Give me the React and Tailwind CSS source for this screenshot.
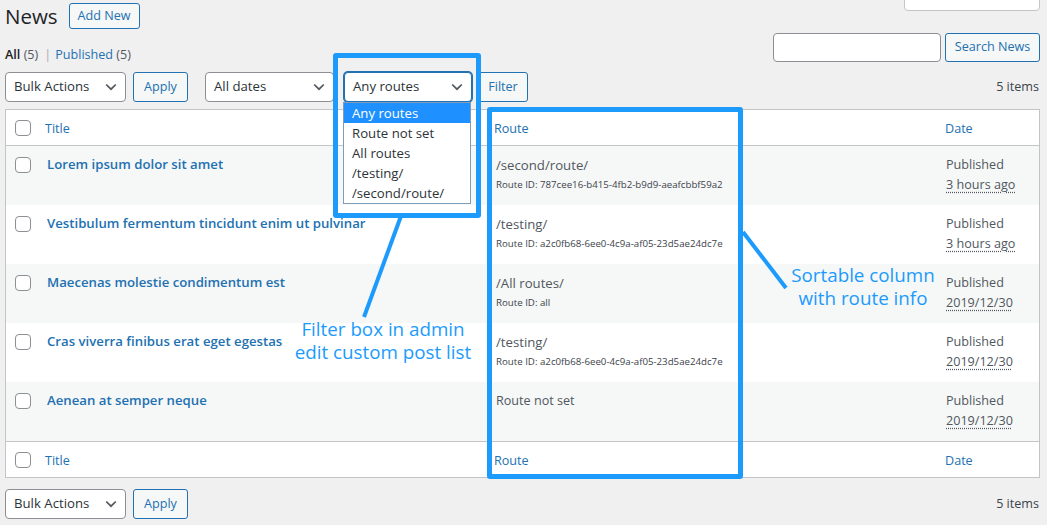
import React from 'react';

// Posts shown in the list table
const rows = [
  {
    title: 'Lorem ipsum dolor sit amet',
    route: '/second/route/',
    routeId: '787cee16-b415-4fb2-b9d9-aeafcbbf59a2',
    date: '3 hours ago',
  },
  {
    title: 'Vestibulum fermentum tincidunt enim ut pulvinar',
    route: '/testing/',
    routeId: 'a2c0fb68-6ee0-4c9a-af05-23d5ae24dc7e',
    date: '3 hours ago',
  },
  {
    title: 'Maecenas molestie condimentum est',
    route: '/All routes/',
    routeId: 'all',
    date: '2019/12/30',
  },
  {
    title: 'Cras viverra finibus erat eget egestas',
    route: '/testing/',
    routeId: 'a2c0fb68-6ee0-4c9a-af05-23d5ae24dc7e',
    date: '2019/12/30',
  },
  {
    title: 'Aenean at semper neque',
    route: null,
    routeId: null,
    date: '2019/12/30',
  },
];

const routeOptions = ['Any routes', 'Route not set', 'All routes', '/testing/', '/second/route/'];

const Chevron = () => (
  <svg width="12" height="8" viewBox="0 0 12 8" className="shrink-0">
    <path d="M1.2 1.5 6 6.2l4.8-4.7" fill="none" stroke="#50575e" strokeWidth="1.7" />
  </svg>
);

const Select = ({ label, className }) => (
  <div
    className={
      'h-[30px] flex items-center justify-between pl-[8px] pr-[8px] bg-white rounded-[4px] text-[13.2px] text-[#2c3338] ' +
      className
    }
  >
    <span>{label}</span>
    <Chevron />
  </div>
);

const Button = ({ children, className = '' }) => (
  <div
    className={
      'h-[30px] flex items-center justify-center border border-[#2271b1] rounded-[3px] bg-[#f6f7f7] text-[12.6px] text-[#2271b1] ' +
      className
    }
  >
    {children}
  </div>
);

const Checkbox = () => (
  <div className="w-[16px] h-[16px] bg-white border border-[#8c8f94] rounded-[4px]" />
);

const HeadRow = () => (
  <div className="grid grid-cols-[31px_449px_451px_1fr] h-[35px] items-center bg-white text-[12.6px] text-[#2271b1]">
    <div className="pl-[9px]">
      <Checkbox />
    </div>
    <div className="pl-[8px] pt-[3px]">Title</div>
    <div className="pl-[8px] pt-[3px]">Route</div>
    <div className="pl-[8px] pt-[3px]">Date</div>
  </div>
);

const Tablenav = ({ children }) => (
  <div className="flex items-center h-[30px]">
    <Select label="Bulk Actions" className="w-[121px] border border-[#8c8f94]" />
    <Button className="ml-[7px] w-[55px]">Apply</Button>
    {children}
    <div className="ml-auto pr-[1px] text-[12.6px] text-[#3c434a]">5 items</div>
  </div>
);

export default function App() {
  return (
    <div className="relative w-[1047px] h-[525px] overflow-hidden bg-[#f0f0f1] font-['Open_Sans',sans-serif] text-[12.6px] text-[#3c434a]">
      {/* screen options tab, mostly scrolled off the top */}
      <div className="absolute left-[904px] top-[-20px] w-[136px] h-[31px] flex items-end justify-center pb-[1px] bg-white border border-[#c3c4c7] rounded-b-[4px] text-[12.6px] text-[#50575e] leading-[14px]">
        <span className="translate-y-[-10px]">Screen Options</span>
      </div>

      <div className="pl-[5px] pr-[7px]">
        <div className="flex items-start h-[33px]">
          <h1 className="mt-[1px] text-[20.5px] leading-[30px] font-normal text-[#1d2327]">News</h1>
          <Button className="ml-[11px] mt-[3px] px-[8px] !h-[26px]">Add New</Button>
        </div>

        <div className="flex justify-between h-[29px]">
          <div className="mt-[13px] leading-[18px]">
            <span className="font-semibold text-[#1d2327]">All</span>{' '}
            <span className="text-[#50575e]">(5)</span>
            <span className="text-[#a7aaad] ml-[6px] mr-[4px]">|</span>
            <span className="text-[#2271b1]">Published</span>{' '}
            <span className="text-[#50575e]">(5)</span>
          </div>
          <div className="flex gap-[4px]">
            <div className="w-[168px] h-[29px] bg-white border border-[#8c8f94] rounded-[4px]" />
            <Button className="w-[95px] !h-[29px]">Search News</Button>
          </div>
        </div>

        <div className="mt-[10px]">
          <Tablenav>
            <Select label="All dates" className="ml-[17px] w-[129px] border border-[#8c8f94]" />
            <Select
              label="Any routes"
              className="ml-[10px] w-[128px] border border-[#2271b1] shadow-[0_0_0_1px_#2271b1]"
            />
            <Button className="ml-[6px] w-[50px]">Filter</Button>
          </Tablenav>
        </div>

        {/* list table */}
        <div className="mt-[7px] border border-[#c3c4c7] bg-white">
          <div className="border-b border-[#c3c4c7]">
            <HeadRow />
          </div>
          {rows.map((r, i) => (
            <div
              key={i}
              className={
                'grid grid-cols-[31px_449px_451px_1fr] h-[59px] ' + (i % 2 === 0 ? 'bg-[#f6f7f7]' : 'bg-white')
              }
            >
              <div className="pl-[9px] pt-[11px]">
                <Checkbox />
              </div>
              <div className="pl-[10px] pt-[8px] text-[13.2px] leading-[20px] font-semibold text-[#2271b1]">
                {r.title}
              </div>
              <div className="pl-[10px] pt-[9px] leading-[20px] text-[#50575e]">
                {r.route ? (
                  <>
                    <div className="text-[13.2px]">{r.route}</div>
                    <div className="text-[9.7px] leading-[20px] text-[#3c434a]">Route ID: {r.routeId}</div>
                  </>
                ) : (
                  <div className="text-[12.6px]">Route not set</div>
                )}
              </div>
              <div className="pl-[9px] pt-[9px] leading-[20px] text-[#50575e]">
                <div>Published</div>
                <div className="underline decoration-dotted decoration-[#50575e] underline-offset-[3px]">{r.date}</div>
              </div>
            </div>
          ))}
          <div className="border-t border-[#c3c4c7]">
            <HeadRow />
          </div>
        </div>

        <div className="mt-[11px]">
          <Tablenav />
        </div>
      </div>

      {/* open route filter dropdown */}
      <div className="absolute left-[343px] top-[102px] w-[128px] border border-[#7f9db9] bg-white text-[13.2px] text-[#2c3338]">
        {routeOptions.map((o, i) => (
          <div
            key={o}
            className={'h-[20px] leading-[20px] pl-[8px] ' + (i === 0 ? 'bg-[#1e90ff] text-white' : '')}
          >
            {o}
          </div>
        ))}
      </div>

      {/* annotation frames */}
      <div className="absolute left-[333px] top-[53px] w-[148px] h-[165px] border-[5px] border-[#1c9bfc] rounded-[3px]" />
      <div className="absolute left-[487px] top-[107px] w-[256px] h-[372px] border-[5px] border-[#1c9bfc] rounded-[3px]" />

      <svg className="absolute inset-0 pointer-events-none" width="1047" height="525">
        <line x1="401" y1="216" x2="364" y2="317" stroke="#1c9bfc" strokeWidth="4" />
        <line x1="743" y1="232" x2="786" y2="288" stroke="#1c9bfc" strokeWidth="4" />
      </svg>

      <div className="absolute left-[283px] top-[318px] w-[200px] flex flex-col items-center text-[18.8px] leading-[23px] text-[#1c9bfc]">
        <div>Filter box in admin</div>
        <div>edit custom post list</div>
      </div>
      <div className="absolute left-[763px] top-[264px] w-[200px] flex flex-col items-center text-[18.8px] leading-[23px] text-[#1c9bfc]">
        <div>Sortable column</div>
        <div>with route info</div>
      </div>
    </div>
  );
}
